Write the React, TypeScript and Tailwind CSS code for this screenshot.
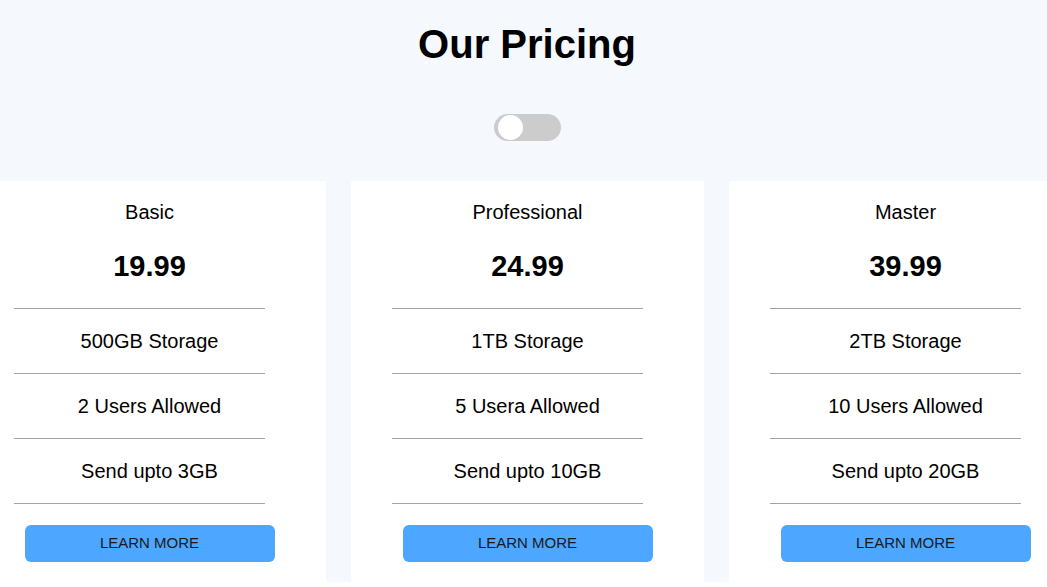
import React from "react";

type Plan = {
  name: string;
  price: string;
  features: string[];
};

const plans: Plan[] = [
  { name: "Basic", price: "19.99", features: ["500GB Storage", "2 Users Allowed", "Send upto 3GB"] },
  { name: "Professional", price: "24.99", features: ["1TB Storage", "5 Usera Allowed", "Send upto 10GB"] },
  { name: "Master", price: "39.99", features: ["2TB Storage", "10 Users Allowed", "Send upto 20GB"] },
];

function Toggle() {
  return (
    <div className="relative h-[27px] w-[67px] rounded-full bg-[#cccccc]">
      <div className="absolute left-[4px] top-[1px] h-[25px] w-[25px] rounded-full bg-white" />
    </div>
  );
}

function PlanCard({ plan }: { plan: Plan }) {
  return (
    <div className="flex w-[353px] shrink-0 flex-col bg-white pt-[20px] pb-[20px]">
      <h3 className="text-center text-[20px] leading-[23px]">{plan.name}</h3>
      <p className="mt-[25px] text-center text-[29px] font-bold leading-[34px]">{plan.price}</p>

      {/* Features */}
      <ul className="mt-[25px]">
        {plan.features.map((f) => (
          <li key={f}>
            <div className="ml-[41px] w-[251px] border-t border-[#a3a3a3]" />
            <p className="py-[20px] text-center text-[20px] leading-[24px]">{f}</p>
          </li>
        ))}
      </ul>
      <div className="ml-[41px] w-[251px] border-t border-[#a3a3a3]" />

      <button className="mx-auto mt-[21px] h-[37px] w-[250px] rounded-[6px] bg-[#4da6ff] text-[15px] text-[#1a1a1a] uppercase">
        Learn More
      </button>
    </div>
  );
}

export default function App() {
  return (
    <div className="w-full overflow-hidden bg-[#f5f9fe] font-['Liberation_Sans',Arial,sans-serif] text-black">
      {/* Header */}
      <div className="flex flex-col items-center pl-[7px] pt-[21px] pb-[40px]">
        <h1 className="text-[40px] font-bold leading-[46px]">Our Pricing</h1>
        <div className="mt-[47px]">
          <Toggle />
        </div>
      </div>

      {/* Cards */}
      <div className="ml-[-27px] flex gap-[25px]">
        {plans.map((p) => (
          <PlanCard key={p.name} plan={p} />
        ))}
      </div>
    </div>
  );
}
